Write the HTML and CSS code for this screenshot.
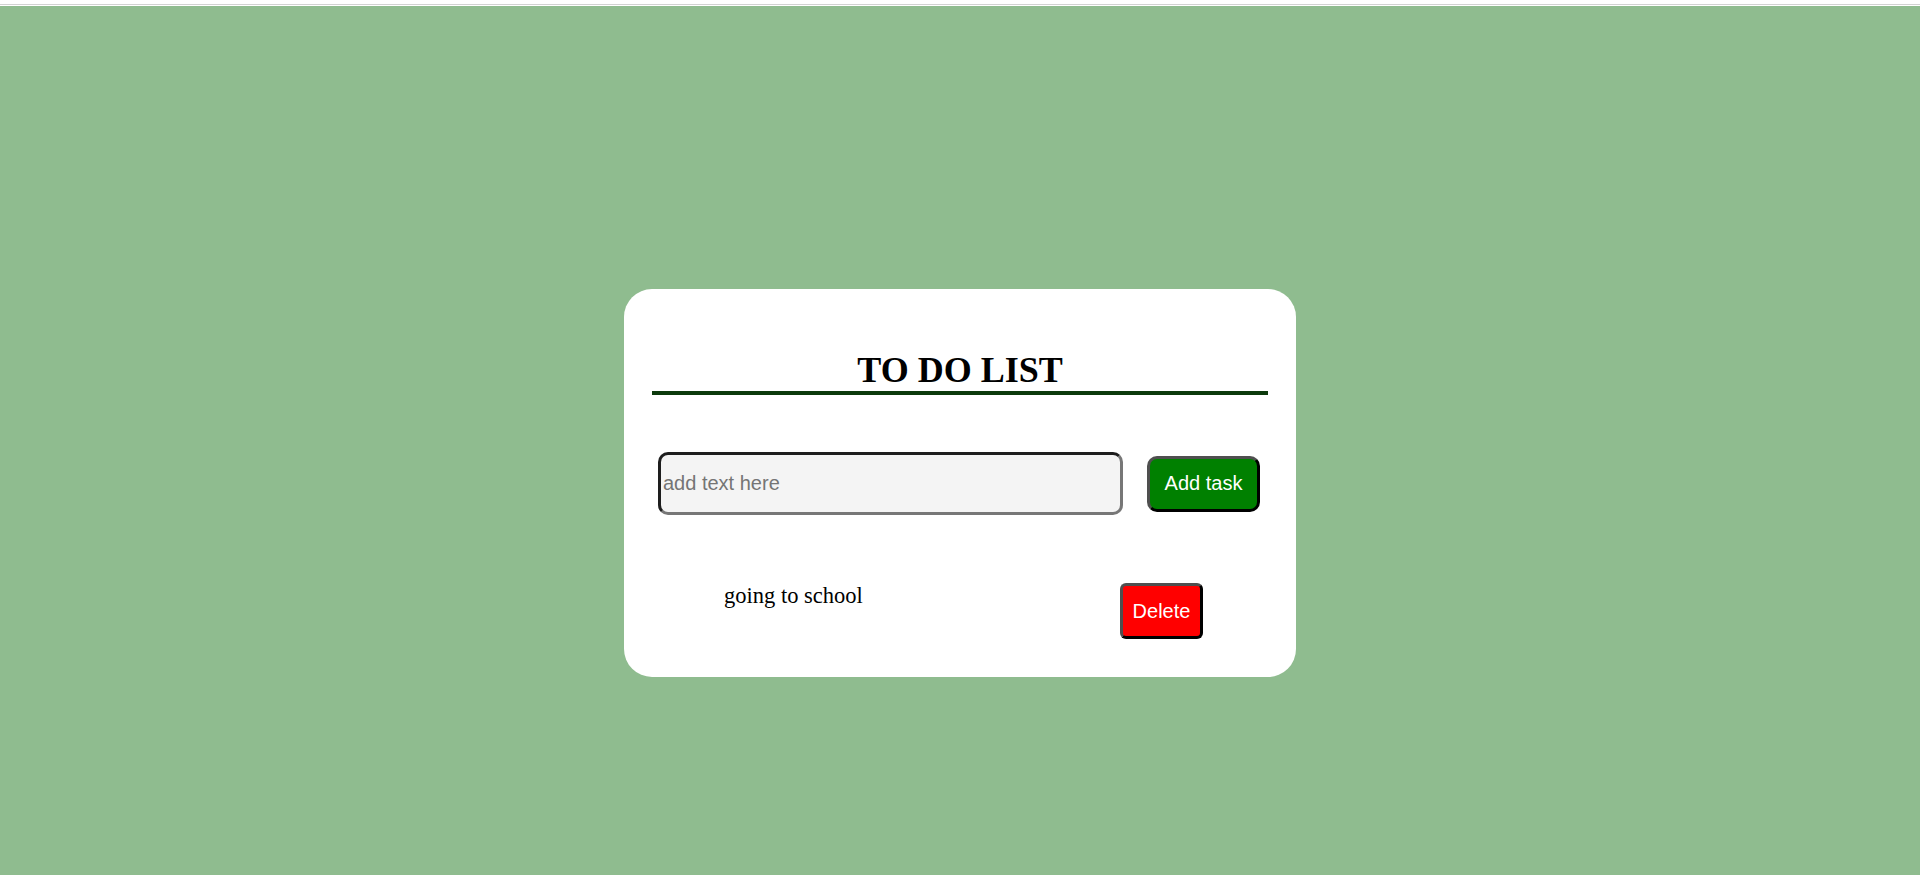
FILE: index.html
```html
<!DOCTYPE html>
<html lang="en">
<head>
<meta charset="UTF-8">
<title>To Do List</title>
<link rel="stylesheet" href="styles.css">
</head>
<body>
<div class="top-strip"></div>
<main class="page">
  <section class="card">
    <h1 class="title">TO DO LIST</h1>
    <div class="add-row">
      <input class="task-input" type="text" placeholder="add text here">
      <button class="btn btn-add">Add task</button>
    </div>
    <ul class="task-list">
      <li class="task-item">
        <span class="task-text">going to school</span>
        <button class="btn btn-delete">Delete</button>
      </li>
    </ul>
  </section>
</main>
</body>
</html>
```
FILE: styles.css
```css
html, body {
  margin: 0;
  padding: 0;
  background: #ffffff;
}

body {
  font-family: "Liberation Serif", "Times New Roman", serif;
  overflow: hidden;
}

.top-strip {
  height: 4px;
  border-bottom: 1px solid #d2d2d2;
  margin-bottom: 1px;
  background: #ffffff;
}

.page {
  background: #8fbc8f;
  min-height: calc(100vh - 6px);
  display: flex;
  flex-direction: column;
  align-items: center;
  padding-top: 283px;
  box-sizing: border-box;
}

.card {
  width: 672px;
  box-sizing: border-box;
  background: #ffffff;
  border-radius: 28px;
  padding: 60px 28px 38px 28px;
}

.title {
  margin: 0;
  font-family: "Liberation Serif", "Times New Roman", serif;
  font-size: 36px;
  font-weight: bold;
  text-align: center;
  color: #000;
  border-bottom: 4px solid #0c3a0c;
}

.add-row {
  display: flex;
  align-items: center;
  justify-content: center;
  gap: 24px;
  margin-top: 57px;
  padding-right: 2px;
}

.task-input {
  width: 465px;
  height: 63px;
  box-sizing: border-box;
  border-width: 3px;
  border-style: solid;
  border-color: #1e1e1e #777777 #777777 #1e1e1e;
  border-radius: 10px;
  background: #f4f4f4;
  padding: 0 2px;
  font-family: "Liberation Sans", Arial, sans-serif;
  font-size: 20px;
  color: #000;
  outline: none;
}

.task-input::placeholder {
  color: #757575;
}

.btn {
  box-sizing: border-box;
  height: 56px;
  border-width: 3px;
  border-style: solid;
  border-color: #4f4f4f #000000 #000000 #4f4f4f;
  color: #ffffff;
  font-family: "Liberation Sans", Arial, sans-serif;
  font-size: 20px;
  padding: 0;
  cursor: pointer;
}

.btn-add {
  width: 113px;
  background: #008000;
  border-radius: 10px;
}

.btn-delete {
  width: 83px;
  background: #ff0000;
  border-radius: 6px;
}

.task-list {
  list-style: none;
  margin: 68px 0 0 0;
  padding: 0;
}

.task-item {
  display: flex;
  justify-content: space-between;
  align-items: flex-start;
  padding: 0 65px 0 72px;
}

.task-text {
  font-size: 22.5px;
  line-height: 25px;
  color: #000;
}
```
